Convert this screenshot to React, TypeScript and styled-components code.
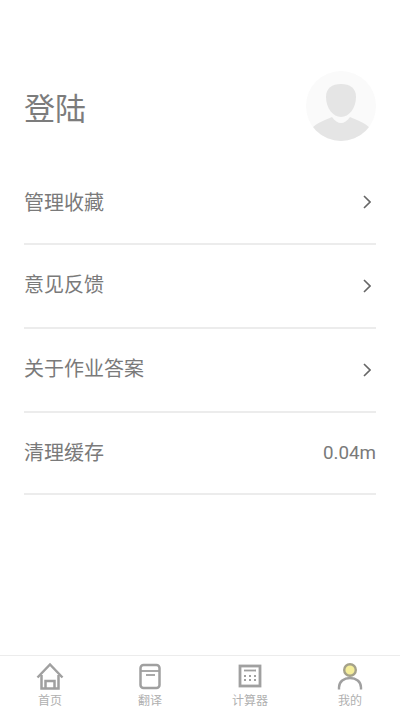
import React from "react";
import styled, { createGlobalStyle } from "styled-components";

const Global = createGlobalStyle`
  html, body { margin: 0; padding: 0; background: #fff; }
  body { font-family: "Liberation Sans", "Noto Sans CJK SC", sans-serif; }
`;

const Page = styled.div`
  width: 400px;
  height: 711px;
  display: flex;
  flex-direction: column;
  overflow: hidden;
`;

const Content = styled.main`
  flex: 1;
  padding: 71px 24px 0;
`;

const Header = styled.header`
  height: 70px;
  display: flex;
  align-items: center;
  justify-content: space-between;
  margin-bottom: 20px;
`;

const Title = styled.h1`
  margin: 0;
  font-size: 31px;
  font-weight: 400;
  color: #7c7c7c;
  font-family: "Noto Sans CJK SC", sans-serif;
`;

const Row = styled.div<{ $h: number }>`
  height: ${(p) => p.$h}px;
  box-sizing: border-box;
  display: flex;
  align-items: center;
  justify-content: space-between;
  border-bottom: 2px solid #ececec;
`;

const Label = styled.span<{ $lift: number }>`
  font-size: 20px;
  color: #7a7a7a;
  font-family: "Noto Sans CJK SC", sans-serif;
  padding-bottom: ${(p) => p.$lift}px;
`;

const Value = styled.span`
  font-size: 18.8px;
  color: #7a7a7a;
  font-family: "Roboto", sans-serif;
`;

const ChevronIcon = styled.svg`
  width: 8px;
  height: 14px;
  margin-right: 5px;
  display: block;
`;

const TabBar = styled.nav`
  height: 56px;
  box-sizing: border-box;
  border-top: 1px solid #ececec;
  display: grid;
  grid-template-columns: repeat(4, 1fr);
`;

const Tab = styled.div`
  display: flex;
  flex-direction: column;
  align-items: center;
  padding-top: 6px;
`;

const TabLabel = styled.span`
  font-size: 12px;
  line-height: 16px;
  margin-top: 2px;
  color: #b0b0b0;
  font-family: "Noto Sans CJK SC", sans-serif;
`;

const TabIcon = styled.svg`
  width: 28px;
  height: 28px;
  display: block;
`;

const Avatar = () => (
  <svg width="70" height="70" viewBox="0 0 70 70">
    <defs>
      <clipPath id="c"><circle cx="35" cy="35" r="35" /></clipPath>
    </defs>
    <circle cx="35" cy="35" r="35" fill="#fafafa" />
    <g clipPath="url(#c)" fill="#e5e5e5">
      <path d="M35 13c9 0 15 4 15 13 0 11-7 20-15 20S20 37 20 26c0-9 6-13 15-13z" />
      <path d="M6 57c5-5 13-8 20-11 3 4 6 6 9 6s6-2 9-6c7 3 15 6 20 11v13H6z" />
    </g>
  </svg>
);

const Chevron = () => (
  <ChevronIcon viewBox="0 0 8 14" fill="none">
    <path d="M1 1l6 6-6 6" stroke="#666" strokeWidth="1.6" />
  </ChevronIcon>
);

const Home = () => (
  <TabIcon viewBox="0 0 28 28" fill="none" stroke="#a0a0a0" strokeWidth="2.5">
    <path d="M1.500 15.500L14 2.500l12.500 13" />
    <path d="M5.500 13v13.500h17V13" />
    <path d="M9.500 26.500v-7.500h9v7.500" />
  </TabIcon>
);

const Book = () => (
  <TabIcon viewBox="0 0 28 28" fill="none" stroke="#a0a0a0" strokeWidth="2.500">
    <rect x="4.500" y="3" width="19" height="23" rx="3" />
    <path d="M4.500 9h19" strokeWidth="1.800" />
    <path d="M10 13h9" strokeWidth="1.800" />
  </TabIcon>
);

const Calc = () => (
  <TabIcon viewBox="0 0 28 28" fill="none" stroke="#a0a0a0" strokeWidth="2.800">
    <rect x="4" y="4" width="20" height="20" />
    <path d="M8 8.500h12" strokeWidth="1.800" />
    <path d="M8 14h2M13 14h2M18 14h2M8 18h2M13 18h2M18 18h2" strokeWidth="2.200" />
  </TabIcon>
);

const Me = () => (
  <TabIcon viewBox="0 0 28 28">
    <circle cx="14" cy="8" r="5.800" fill="#f5ee9a" stroke="#a5a28a" strokeWidth="2.400" />
    <path d="M3 27.500v-2c0-6 5-9.500 11-9.500s11 3.500 11 9.500v2" fill="none" stroke="#a0a0a0" strokeWidth="2.400" />
  </TabIcon>
);

export default function App() {
  return (
    <Page>
      <Global />
      <Content>
        <Header>
          <Title>登陆</Title>
          <Avatar />
        </Header>
        <Row $h={84}><Label $lift={2}>管理收藏</Label><Chevron /></Row>
        <Row $h={84}><Label $lift={6}>意见反馈</Label><Chevron /></Row>
        <Row $h={84}><Label $lift={6}>关于作业答案</Label><Chevron /></Row>
        <Row $h={82}><Label $lift={4}>清理缓存</Label><Value>0.04m</Value></Row>
      </Content>
      <TabBar>
        <Tab><Home /><TabLabel>首页</TabLabel></Tab>
        <Tab><Book /><TabLabel>翻译</TabLabel></Tab>
        <Tab><Calc /><TabLabel>计算器</TabLabel></Tab>
        <Tab><Me /><TabLabel>我的</TabLabel></Tab>
      </TabBar>
    </Page>
  );
}
